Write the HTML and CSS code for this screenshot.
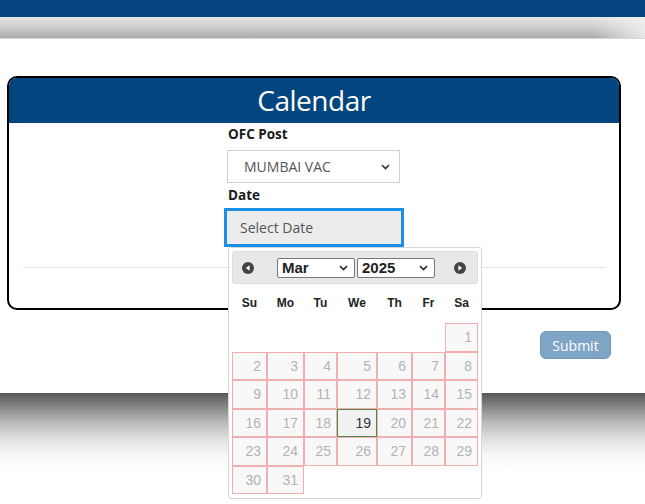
FILE: index.html
```html
<!DOCTYPE html>
<html lang="en">
<head>
<meta charset="utf-8">
<title>Calendar</title>
<link rel="stylesheet" href="styles.css">
</head>
<body>
<div class="topbar"></div>
<div class="subbar"></div>
<main class="main">
  <section class="card">
    <h1 class="card-title">Calendar</h1>
    <div class="form">
      <label class="lbl">OFC Post</label>
      <div class="select">
        <span>MUMBAI VAC</span>
        <svg class="chev" width="9" height="6" viewBox="0 0 9 6"><path d="M1 1l3.5 3.5L8 1" fill="none" stroke="#333" stroke-width="1.6"/></svg>
      </div>
      <label class="lbl lbl-date">Date</label>
      <div class="date-wrap">
        <div class="date-input">Select Date</div>
        <div class="datepicker">
          <div class="dp-head">
            <svg class="dp-nav" width="12" height="12" viewBox="0 0 12 12"><circle cx="6" cy="6" r="6" fill="#444"/><path d="M7.6 3.2v5.6L3.8 6z" fill="#fff"/></svg>
            <div class="dp-sel dp-month"><span>Mar</span><svg width="9" height="6" viewBox="0 0 9 6"><path d="M1 1l3.5 3.5L8 1" fill="none" stroke="#222" stroke-width="1.6"/></svg></div>
            <div class="dp-sel dp-year"><span>2025</span><svg width="9" height="6" viewBox="0 0 9 6"><path d="M1 1l3.5 3.5L8 1" fill="none" stroke="#222" stroke-width="1.6"/></svg></div>
            <svg class="dp-nav dp-next" width="12" height="12" viewBox="0 0 12 12"><circle cx="6" cy="6" r="6" fill="#444"/><path d="M4.4 3.2v5.6L8.2 6z" fill="#fff"/></svg>
          </div>
          <div class="dp-grid">
            <div class="dn">Su</div><div class="dn">Mo</div><div class="dn">Tu</div><div class="dn">We</div><div class="dn">Th</div><div class="dn">Fr</div><div class="dn">Sa</div>
            <div class="empty"></div><div class="empty"></div><div class="empty"></div><div class="empty"></div><div class="empty"></div><div class="empty"></div><div class="d">1</div>
            <div class="d">2</div><div class="d">3</div><div class="d">4</div><div class="d">5</div><div class="d">6</div><div class="d">7</div><div class="d">8</div>
            <div class="d">9</div><div class="d">10</div><div class="d">11</div><div class="d">12</div><div class="d">13</div><div class="d">14</div><div class="d">15</div>
            <div class="d">16</div><div class="d">17</div><div class="d">18</div><div class="d today">19</div><div class="d">20</div><div class="d">21</div><div class="d">22</div>
            <div class="d">23</div><div class="d">24</div><div class="d">25</div><div class="d">26</div><div class="d">27</div><div class="d">28</div><div class="d">29</div>
            <div class="d">30</div><div class="d">31</div>
          </div>
        </div>
      </div>
    </div>
    <hr class="rule">
  </section>
  <div class="actions"><button class="submit" type="button">Submit</button></div>
</main>
<div class="shade"></div>
</body>
</html>
```
FILE: styles.css
```css
* { box-sizing: border-box; }
html, body { margin: 0; padding: 0; }
body {
  width: 645px;
  height: 504px;
  overflow: hidden;
  background: #fff;
  font-family: "Open Sans", "Noto Sans", sans-serif;
  color: #222;
}
.topbar { height: 17px; background: #03437f; }
.subbar {
  height: 22px;
  background:
    linear-gradient(to right, rgba(255,255,255,0) 92%, rgba(240,240,240,0.9) 100%),
    linear-gradient(#e6e6e6 0%, #cfcfcf 45%, #acacac 100%);
  border-bottom: 1px solid #d6d6d6;
}
.main { padding: 37px 0 34px 0; }
.card {
  margin: 0 24px 0 7px;
  border: 2px solid #000;
  border-radius: 10px;
  padding-bottom: 40px;
  position: relative;
}
.card-title {
  margin: 0;
  height: 45px;
  background: #03467f;
  border-radius: 8px 8px 0 0;
  color: #fff;
  font-weight: 400;
  font-size: 28px;
  line-height: 45px;
  text-align: center;
  letter-spacing: -0.5px;
}
.form {
  width: 180px;
  margin: 0 auto;
  display: flex;
  flex-direction: column;
}
.lbl {
  display: block;
  font-size: 13.5px;
  font-weight: 700;
  line-height: 20px;
  margin-top: 1px;
  padding-left: 4px;
  color: #1a1a1a;
}
.lbl-date { margin-top: 2px; }
.select {
  margin: 6px 0 0 3px;
  width: 173px;
  height: 33px;
  border: 1px solid #cfcfcf;
  display: flex;
  align-items: center;
  justify-content: space-between;
  padding: 0 9px 0 16px;
  font-size: 14px;
  color: #555;
}
.date-wrap { position: relative; margin-top: 3px; }
.date-input {
  height: 39px;
  border: 3px solid #1a8fe6;
  background: #ececec;
  font-size: 14px;
  color: #555;
  display: flex;
  align-items: center;
  padding-left: 13px;
}
.rule {
  margin: 20px 14px 0 14px;
  border: 0;
  border-top: 1px solid #e4e4e4;
}
.actions { display: flex; justify-content: flex-end; padding: 21px 34px 0 0; }
.submit {
  width: 71px;
  height: 28px;
  border: 1px solid #7197b9;
  border-radius: 6px;
  background: #7ea5c5;
  color: #fff;
  font-family: "Open Sans", "Noto Sans", sans-serif;
  font-size: 14px;
  padding: 0;
}
.shade {
  height: 109px;
  background: linear-gradient(#585858 0px, #8a8a8a 15px, #bcbcbc 30px, #e0e0e0 46px, #f7f7f7 62px, #ffffff 80px);
}

/* datepicker overlay */
.datepicker {
  position: absolute;
  top: 100%;
  left: 4px;
  width: 254px;
  background: #fff;
  border: 1px solid #d6d6d6;
  border-radius: 3px;
  padding: 3px 3px 4px 3px;
  font-family: "Liberation Sans", Arial, sans-serif;
  z-index: 5;
}
.dp-head {
  height: 33px;
  background: #e8e8e8;
  border: 1px solid #dcdcdc;
  border-radius: 3px;
  display: flex;
  align-items: center;
  padding: 0 11px 0 9px;
}
.dp-nav { flex: none; }
.dp-next { margin-left: auto; }
.dp-sel {
  height: 20px;
  border: 1px solid #777;
  border-radius: 2px;
  background: #fff;
  display: flex;
  align-items: center;
  justify-content: space-between;
  padding: 0 6px 0 4px;
  font-weight: 700;
  font-size: 15px;
  color: #222;
}
.dp-month { width: 78px; margin-left: 23px; }
.dp-year { width: 78px; margin-left: 2px; }
.dp-grid {
  display: grid;
  grid-template-columns: 35px 37px 33px 40px 35px 33px 33px;
  grid-auto-rows: 28.5px;
  grid-template-rows: 39px;
}
.dn {
  font-weight: 700;
  font-size: 12px;
  color: #222;
  display: flex;
  align-items: center;
  justify-content: center;
  padding-bottom: 2px;
}
.d {
  border: 1px solid #f1b0b0;
  background: #f8f8f8;
  color: #b3b3b3;
  font-size: 14px;
  display: flex;
  align-items: center;
  justify-content: flex-end;
  padding-right: 5px;
}
.d.today {
  border-color: #55864a;
  background: #f1f1f1;
  color: #333;
}
```
